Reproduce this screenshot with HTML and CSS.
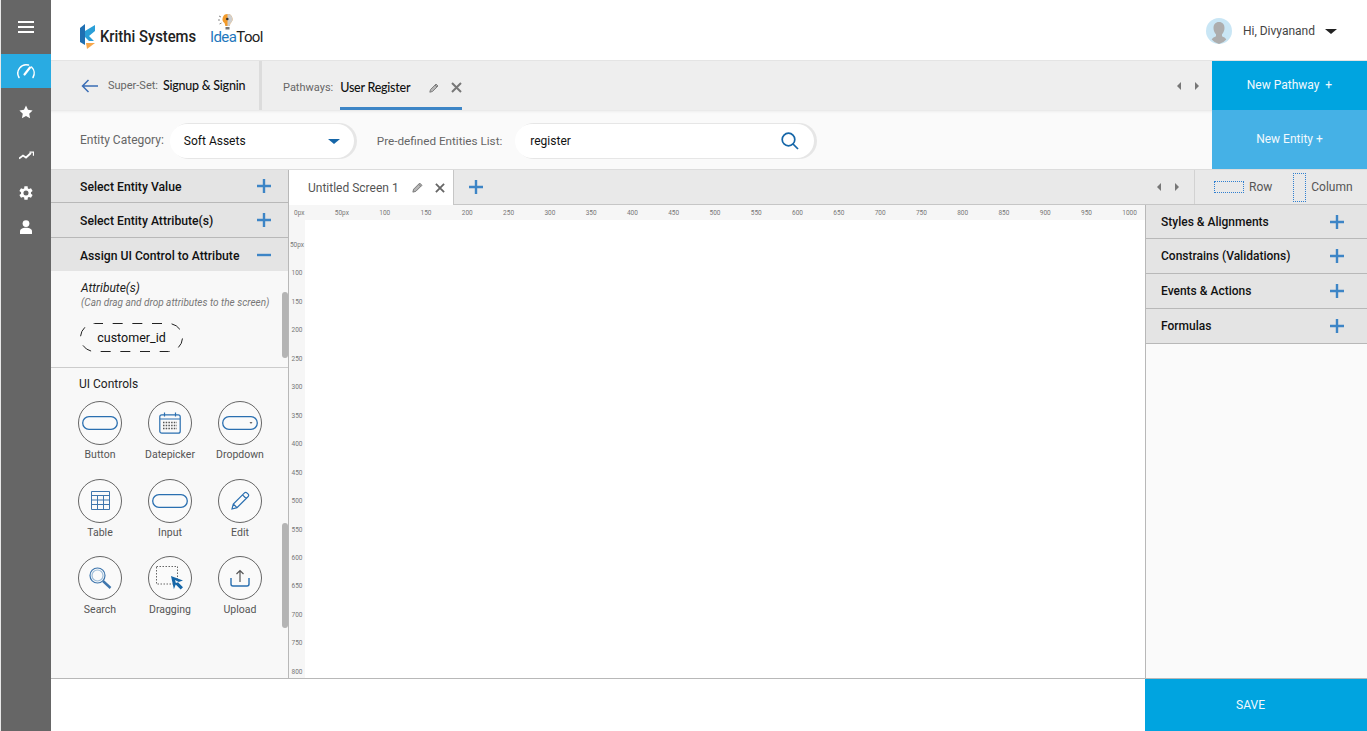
FILE: index.html
```html
<!DOCTYPE html>
<html lang="en">
<head>
    <meta charset="UTF-8">
    <title>IdeaTool - Screen Builder</title>
    <link rel="stylesheet" href="styles.css">
</head>
<body>
<div class="app">
    <!-- left icon rail -->
    <nav class="sidebar">
        <div class="side-item side-menu">
            <svg width="16" height="14" viewBox="0 0 16 14"><path d="M0 2h16M0 7h16M0 12h16" stroke="#fff" stroke-width="2"/></svg>
        </div>
        <div class="side-item side-active">
            <svg width="20" height="16" viewBox="0 0 20 16" fill="none" stroke="#fff" stroke-width="1.5" stroke-linecap="round"><path d="M3 14.5A8.5 8.5 0 0 1 12.5 2"/><path d="M15.5 4A8.5 8.5 0 0 1 17 14.5"/><path d="M8.5 11.5L14 4.5" stroke-width="2.2"/></svg>
        </div>
        <div class="side-item side-star">
            <svg width="14" height="14" viewBox="0 0 24 24" fill="#fff"><path d="M12 1l3.4 7.3 7.9 1-5.8 5.5 1.5 7.9L12 18.8l-7 3.9 1.5-7.9L.7 9.3l7.9-1z"/></svg>
        </div>
        <div class="side-item side-trend">
            <svg width="15" height="9" viewBox="0 0 15 9" fill="none" stroke="#fff" stroke-width="1.8"><path d="M0 7.5l4-3 3 2 5-4.5"/><path d="M10.5 1.2h4v3.5" stroke-width="1.3"/></svg>
        </div>
        <div class="side-item side-gear">
            <svg width="16" height="16" viewBox="0 0 24 24" fill="#fff"><path d="M19.4 13a7.6 7.6 0 0 0 0-2l2.5-1.9-2.4-4.2-3 1.2a7.5 7.5 0 0 0-1.7-1L14.4 1.900H9.600l-.4 3.200a7.500 7.500 0 0 0-1.700 1l-3-1.200-2.400 4.200L4.600 11a7.600 7.600 0 0 0 0 2l-2.500 1.900 2.400 4.200 3-1.200c.5.400 1.100.7 1.700 1l.4 3.200h4.800l.4-3.200c.6-.3 1.200-.6 1.700-1l3 1.200 2.400-4.200zM12 15.800a3.800 3.800 0 1 1 0-7.600 3.800 3.800 0 0 1 0 7.600z"/></svg>
        </div>
        <div class="side-item side-user">
            <svg width="12" height="14" viewBox="0 0 12 14" fill="#fff"><circle cx="6" cy="3.6" r="3.4"/><path d="M0 14v-2.500C0 9 2.500 7.800 6 7.800s6 1.200 6 3.700V14z"/></svg>
        </div>
    </nav>

    <div class="content">
        <header class="topbar">
            <div class="logo">
                <svg width="16" height="25" viewBox="0 0 16 25"><path d="M0 4l5-4v21l-5-3z" fill="#1f6fb2"/><path d="M5 7L15 1v6l-6 5 5 5H9L5 13z" fill="#2a9fd8"/><path d="M6 19h9l-8 6z" fill="#f7a74a"/></svg>
                <span class="logo-name">Krithi Systems</span>
            </div>
            <div class="idea-logo">
                <svg class="bulb" width="18" height="18" viewBox="0 0 18 18"><path d="M9.5 1a5 5 0 0 0-3 9l.8 3h4.400l.8-3a5 5 0 0 0-3-9z" fill="#f29b2c"/><path d="M9.500 1a5 5 0 0 1 3 9l-.8 3H9.500z" fill="#cfcfcf"/><path d="M7.500 14h4v2.500h-4z" fill="#777"/><circle cx="9.300" cy="6" r="1.300" fill="#333"/><path d="M1 3l2 1M0 7h2M1.500 11l2-1" stroke="#555" stroke-width=".7"/></svg>
                <span class="idea">Idea</span><span class="tool">Tool</span>
            </div>
            <div class="user-box">
                <svg width="26" height="26" viewBox="0 0 26 26"><circle cx="13" cy="13" r="13" fill="#c9e6f5"/><path d="M13 4c3.500 0 5.500 2.500 5.500 6 0 3-1.300 5-2.500 6.200v2c1.800 1 3.500 1.500 4.300 3.300A13 13 0 0 1 13 26a13 13 0 0 1-7.300-4.500c.8-1.800 2.500-2.300 4.300-3.300v-2C8.800 15 7.500 13 7.500 10 7.500 6.500 9.500 4 13 4z" fill="#adadad"/></svg>
                <span class="user-name">Hi, Divyanand</span>
                <span class="caret caret-dark"></span>
            </div>
        </header>

        <div class="pathbar">
            <div class="superset">
                <svg width="17" height="14" viewBox="0 0 17 14" fill="none" stroke="#3a6db5" stroke-width="1.5"><path d="M17 7H1.500M7.500 1L1.500 7l6 6"/></svg>
                <span class="label super-label">Super-Set:</span>
                <span class="strong-name">Signup &amp; Signin</span>
            </div>
            <div class="pathway-tab">
                <span class="label">Pathways:</span>
                <span class="strong-name path-name">User Register</span>
                <svg class="pencil" width="10" height="10" viewBox="0 0 10 10" fill="#b5b5b5" stroke="#777" stroke-width=".9"><path d="M.8 9.200l.7-2.700L7 1l2 2-5.500 5.500zM6 2l2 2"/></svg>
                <svg class="close" width="11" height="11" viewBox="0 0 11 11" stroke="#777" stroke-width="2"><path d="M1 1l9 9M10 1l-9 9"/></svg>
            </div>
            <div class="pager pathbar-pager">
                <span class="arrow-left"></span>
                <span class="arrow-right"></span>
            </div>
            <button class="new-btn new-pathway">New Pathway&nbsp; +</button>
        </div>

        <div class="entitybar">
            <span class="label entity-label">Entity Category:</span>
            <div class="pill select-pill">
                <span>Soft Assets</span>
                <span class="caret caret-blue"></span>
            </div>
            <span class="label list-label">Pre-defined Entities List:</span>
            <div class="pill search-pill">
                <span>register</span>
                <svg width="18" height="18" viewBox="0 0 18 18" fill="none" stroke="#1566a8" stroke-width="1.7"><circle cx="7.5" cy="7.5" r="6.3"/><path d="M12 12l5 5"/></svg>
            </div>
            <button class="new-btn new-entity">New Entity +</button>
        </div>

        <div class="workspace">
            <aside class="left-panel">
                <div class="acc-head acc-first">
                    <span>Select Entity Value</span>
                    <svg width="14" height="14" viewBox="0 0 14 14"><path d="M7 0v14M0 7h14" stroke="#3d85c6" stroke-width="2.4"/></svg>
                </div>
                <div class="acc-head acc-second">
                    <span>Select Entity Attribute(s)</span>
                    <svg width="14" height="14" viewBox="0 0 14 14"><path d="M7 0v14M0 7h14" stroke="#3d85c6" stroke-width="2.4"/></svg>
                </div>
                <div class="acc-head acc-open">
                    <span>Assign UI Control to Attribute</span>
                    <svg width="14" height="14" viewBox="0 0 14 14"><path d="M0 7h14" stroke="#3d85c6" stroke-width="2.4"/></svg>
                </div>
                <section class="attributes">
                    <div class="attr-title">Attribute(s)</div>
                    <div class="attr-hint">(Can drag and drop attributes to the screen)</div>
                    <div class="attr-pill">
                        <svg width="103" height="29" viewBox="0 0 103 29" fill="none"><rect x=".5" y=".5" width="102" height="28" rx="14" stroke="#222" stroke-width="1" stroke-dasharray="10 9.67" stroke-dashoffset="1.5"/></svg>
                        <span>customer_id</span>
                    </div>
                    <div class="scroll-thumb thumb-top"></div>
                </section>
                <section class="controls">
                    <div class="controls-title">UI Controls</div>
                    <div class="controls-grid">
                        <div class="control">
                            <div class="control-circle"><svg width="36" height="14" viewBox="0 0 36 14" fill="none" stroke="#2a6fb0" stroke-width="1.3"><rect x=".7" y=".7" width="34.6" height="12.6" rx="6.3"/></svg></div>
                            <span>Button</span>
                        </div>
                        <div class="control">
                            <div class="control-circle"><svg width="22" height="22" viewBox="0 0 22 22" fill="none" stroke="#2a6fb0" stroke-width="1.2"><rect x=".8" y="2.8" width="20.4" height="18.4" rx="2"/><path d="M.8 7h20.400M5.500 .5v4M16.500 .5v4"/><path d="M4 10.500h14M4 13.500h14M4 16.500h14" stroke-width="1.4" stroke-dasharray="1.5 1.2" stroke="#555"/></svg></div>
                            <span>Datepicker</span>
                        </div>
                        <div class="control">
                            <div class="control-circle"><svg width="36" height="14" viewBox="0 0 36 14" fill="none" stroke="#2a6fb0" stroke-width="1.3"><rect x=".7" y=".7" width="34.6" height="12.6" rx="6.3"/><path d="M27.500 6h3l-1.500 2z" fill="#666" stroke="none"/></svg></div>
                            <span>Dropdown</span>
                        </div>
                        <div class="control">
                            <div class="control-circle"><svg width="19" height="19" viewBox="0 0 19 19" fill="none" stroke="#3f76ad" stroke-width="1"><path d="M.5.500h18v18H.5zM.5 4.500h18M.5 9h18M.5 13.500h18M6.500 4.500v14M12.500 4.500v14"/></svg></div>
                            <span>Table</span>
                        </div>
                        <div class="control">
                            <div class="control-circle"><svg width="36" height="14" viewBox="0 0 36 14" fill="none" stroke="#2a6fb0" stroke-width="1.3"><rect x=".7" y=".7" width="34.6" height="12.6" rx="6.3"/></svg></div>
                            <span>Input</span>
                        </div>
                        <div class="control">
                            <div class="control-circle"><svg width="19" height="19" viewBox="0 0 19 19" fill="none" stroke="#2a6fb0" stroke-width="1.2"><path d="M1 18l1.300-5L13.500 1.800a1.600 1.600 0 0 1 2.300 0l1.400 1.400a1.600 1.600 0 0 1 0 2.300L6 16.700zM2.300 13L6 16.700M11.500 3.800l3.700 3.700"/></svg></div>
                            <span>Edit</span>
                        </div>
                        <div class="control">
                            <div class="control-circle"><svg width="23" height="23" viewBox="0 0 23 23" fill="none" stroke="#3f76ad" stroke-width="1.2"><circle cx="8.5" cy="8.5" r="7.5"/><circle cx="8.5" cy="8.5" r="5.5" stroke="#9cbcd8"/><path d="M14 14l7.500 7" stroke-width="2.4"/></svg></div>
                            <span>Search</span>
                        </div>
                        <div class="control">
                            <div class="control-circle"><svg width="28" height="24" viewBox="0 0 28 24" fill="none"><rect x=".5" y=".5" width="21" height="17.5" stroke="#666" stroke-dasharray="1.5 1.5"/><path d="M15 10l12 4.500-5 1.800 5 5-2.300 2.200-5-5-1.800 4.800z" fill="#1566a8"/><path d="M19 14l.9 3 3-1.100z" fill="#f8f8f8"/></svg></div>
                            <span>Dragging</span>
                        </div>
                        <div class="control">
                            <div class="control-circle"><svg width="20" height="18" viewBox="0 0 20 18" fill="none" stroke="#2a6fb0" stroke-width="1.4"><path d="M1 9v6a2 2 0 0 0 2 2h14a2 2 0 0 0 2-2V9"/><path d="M10 13V1.500M6.500 5L10 1.500 13.500 5" stroke="#555" stroke-width="1.2"/></svg></div>
                            <span>Upload</span>
                        </div>
                    </div>
                    <div class="scroll-thumb thumb-bottom"></div>
                </section>
            </aside>

            <div class="work-area">
                <div class="screen-tabs">
                    <div class="screen-tab">
                        <span class="screen-name">Untitled Screen 1</span>
                        <svg class="pencil" width="11" height="11" viewBox="0 0 10 10" fill="#b5b5b5" stroke="#777" stroke-width=".9"><path d="M.8 9.200l.7-2.700L7 1l2 2-5.500 5.500zM6 2l2 2"/></svg>
                        <svg class="close" width="10" height="10" viewBox="0 0 11 11" stroke="#666" stroke-width="2"><path d="M1 1l9 9M10 1l-9 9"/></svg>
                    </div>
                    <svg class="add-screen" width="14" height="14" viewBox="0 0 14 14"><path d="M7 0v14M0 7h14" stroke="#3d85c6" stroke-width="2.4"/></svg>
                    <div class="pager tabs-pager">
                        <span class="arrow-left"></span>
                        <span class="arrow-right"></span>
                    </div>
                    <div class="layout-tools">
                        <span class="dash-box dash-row"></span>
                        <span class="row-label">Row</span>
                        <span class="dash-box dash-col"></span>
                        <span>Column</span>
                    </div>
                </div>
                <div class="work-body">
                    <main class="canvas">
                        <div class="ruler-x">
                            <span>0px</span><span>50px</span><span>100</span><span>150</span><span>200</span><span>250</span><span>300</span><span>350</span><span>400</span><span>450</span><span>500</span><span>550</span><span>600</span><span>650</span><span>700</span><span>750</span><span>800</span><span>850</span><span>900</span><span>950</span><span>1000</span>
                        </div>
                        <div class="canvas-body">
                            <div class="ruler-y">
                                <span>50px</span><span>100</span><span>150</span><span>200</span><span>250</span><span>300</span><span>350</span><span>400</span><span>450</span><span>500</span><span>550</span><span>600</span><span>650</span><span>700</span><span>750</span><span>800</span>
                            </div>
                            <div class="sheet"></div>
                        </div>
                    </main>
                    <aside class="right-panel">
                        <div class="acc-head right-head head-short">
                            <span>Styles &amp; Alignments</span>
                            <svg width="14" height="14" viewBox="0 0 14 14"><path d="M7 0v14M0 7h14" stroke="#3d85c6" stroke-width="2.4"/></svg>
                        </div>
                        <div class="acc-head right-head">
                            <span>Constrains (Validations)</span>
                            <svg width="14" height="14" viewBox="0 0 14 14"><path d="M7 0v14M0 7h14" stroke="#3d85c6" stroke-width="2.4"/></svg>
                        </div>
                        <div class="acc-head right-head">
                            <span>Events &amp; Actions</span>
                            <svg width="14" height="14" viewBox="0 0 14 14"><path d="M7 0v14M0 7h14" stroke="#3d85c6" stroke-width="2.4"/></svg>
                        </div>
                        <div class="acc-head right-head">
                            <span>Formulas</span>
                            <svg width="14" height="14" viewBox="0 0 14 14"><path d="M7 0v14M0 7h14" stroke="#3d85c6" stroke-width="2.4"/></svg>
                        </div>
                    </aside>
                </div>
            </div>
        </div>

        <footer class="footer">
            <button class="save-btn">SAVE</button>
        </footer>
    </div>
</div>
</body>
</html>
```

FILE: styles.css
```css
* {
    box-sizing: border-box;
}

body {
    margin: 0;
    font-family: Roboto, "Liberation Sans", sans-serif;
    color: #111;
    background: #fff;
    overflow: hidden;
}

.app {
    display: flex;
    width: 1367px;
    height: 731px;
}

/* icon rail */
.sidebar {
    width: 51px;
    flex-shrink: 0;
    background: #666;
    border-left: 1px solid #e8e8e8;
}

.side-item {
    display: flex;
    justify-content: center;
    align-items: center;
}

.side-menu { height: 54px; }
.side-active { height: 34px; background: #29abe2; }
.side-star { height: 47px; }
.side-trend { height: 40px; }
.side-gear { height: 36px; }
.side-user { height: 31px; }

.content {
    flex: 1;
    display: flex;
    flex-direction: column;
    min-width: 0;
}

/* top header */
.topbar {
    height: 61px;
    display: flex;
    align-items: center;
    padding-left: 29px;
    background: #fff;
    border-bottom: 1px solid #e4e4e4;
}

.logo {
    display: flex;
    align-items: center;
    gap: 4px;
    margin-top: 12px;
}

.logo-name {
    width: 96px;
    font-size: 17px;
    font-weight: 500;
    color: #222;
    white-space: nowrap;
    transform: scaleX(0.87);
    transform-origin: left center;
}

.idea-logo {
    position: relative;
    margin-left: 14px;
    margin-top: 13px;
    font-size: 15px;
    letter-spacing: -0.6px;
}

.idea-logo .bulb {
    position: absolute;
    left: 8px;
    top: -15px;
}

.idea { color: #1f78bd; }
.tool { color: #222; }

.user-box {
    margin-left: auto;
    margin-right: 30px;
    padding-top: 2px;
    display: flex;
    align-items: center;
}

.user-name {
    margin-left: 11px;
    margin-right: 10px;
    font-size: 12px;
    color: #444;
}

.caret {
    width: 0;
    height: 0;
    border-left: 6px solid transparent;
    border-right: 6px solid transparent;
}

.caret-dark { border-top: 5px solid #222; }
.caret-blue { border-top: 5px solid #1566a8; }

/* pathway row */
.pathbar {
    height: 49px;
    display: flex;
    align-items: center;
    background: #eee;
}

.superset {
    width: 211px;
    height: 100%;
    display: flex;
    align-items: center;
    padding-left: 30px;
    border-right: 3px solid #dcdcdc;
    flex-shrink: 0;
}

.label {
    font-size: 12px;
    color: #666;
    white-space: nowrap;
}

.superset .label, .pathway-tab .label { font-size: 11px; }
.super-label { margin-left: 10px; margin-right: 5px; }

.strong-name {
    font-family: Lato, sans-serif;
    font-size: 12.5px;
    font-weight: 500;
    letter-spacing: -0.25px;
    color: #111;
    white-space: nowrap;
}

.pathway-tab {
    position: relative;
    height: 100%;
    display: flex;
    align-items: center;
    margin-left: 21px;
    padding-top: 4px;
}

.pathway-tab::after {
    content: "";
    position: absolute;
    left: 57px;
    right: 0;
    bottom: 0;
    height: 3px;
    background: #3d85c6;
}

.path-name { margin-left: 7px; }
.pathway-tab .pencil { margin-left: 19px; }
.pathway-tab .close { margin-left: 12px; }

.pager {
    display: flex;
    align-items: center;
    gap: 14px;
}

.pathbar-pager { margin-left: auto; margin-right: 13px; }

.arrow-left, .arrow-right {
    width: 0;
    height: 0;
    border-top: 4.5px solid transparent;
    border-bottom: 4.5px solid transparent;
}

.arrow-left { border-right: 4px solid #777; }
.arrow-right { border-left: 4px solid #777; }

.new-btn {
    width: 155px;
    height: 100%;
    border: 0;
    padding: 0;
    color: #f2f9fd;
    font-family: inherit;
    font-size: 12px;
    flex-shrink: 0;
}

.new-pathway { background: #00a4e0; padding-bottom: 2px; }

/* entity row */
.entitybar {
    height: 59px;
    display: flex;
    align-items: center;
    padding-left: 29px;
    background: #fafafa;
    box-shadow: inset 0 3px 3px -2px #e2e2e2;
}

.entity-label { margin-right: 6px; }
.list-label { margin: 3px 13px 0 23px; font-size: 11.7px; }

.pill {
    height: 34px;
    margin-top: 3px;
    display: flex;
    align-items: center;
    justify-content: space-between;
    background: #fff;
    border-radius: 17px;
    font-size: 12px;
    box-shadow: 2px 0 0 1px #e6e6e6;
}

.select-pill { width: 184px; padding: 0 14px; }
.search-pill { width: 299px; padding: 0 15px; }

.new-entity {
    margin-left: auto;
    padding-bottom: 2px;
    background: #45b1e6;
}

/* main work area */
.workspace {
    flex: 1;
    display: flex;
    min-height: 0;
    border-top: 1px solid #dcdcdc;
}

.left-panel {
    width: 238px;
    flex-shrink: 0;
    display: flex;
    flex-direction: column;
    background: #f8f8f8;
    border-right: 1px solid #b8b8b8;
}

.acc-head {
    display: flex;
    align-items: center;
    justify-content: space-between;
    padding: 0 17px 0 29px;
    background: #e4e4e4;
    font-size: 12.2px;
    font-weight: 500;
    border-bottom: 1px solid #b8b8b8;
    flex-shrink: 0;
}

.left-panel .acc-head span { margin-top: 2px; }

.acc-first { height: 33px; }
.acc-second { height: 35px; }
.acc-open { height: 33px; border-bottom: 0; }

.attributes {
    position: relative;
    height: 97px;
    padding: 10px 0 0 30px;
    border-bottom: 1px solid #ccc;
    flex-shrink: 0;
}

.attr-title {
    font-size: 12px;
    font-style: italic;
    color: #222;
}

.attr-hint {
    margin-top: 2px;
    font-size: 10px;
    font-style: italic;
    color: #777;
    white-space: nowrap;
}

.attr-pill {
    position: relative;
    width: 103px;
    height: 29px;
    margin-top: 15px;
    margin-left: -1px;
    display: flex;
    align-items: center;
    justify-content: center;
    font-size: 12.5px;
}

.attr-pill svg {
    position: absolute;
    left: 0;
    top: 0;
}

.scroll-thumb {
    position: absolute;
    right: 0;
    width: 6px;
    background: #b4b4b4;
    border-radius: 3px;
}

.thumb-top { top: 21px; height: 66px; }
.thumb-bottom { top: 155px; height: 105px; }

.controls {
    position: relative;
    flex: 1;
    padding: 9px 0 0 14px;
}

.controls-title {
    padding-left: 14px;
    font-size: 12px;
    color: #222;
}

.controls-grid {
    display: grid;
    grid-template-columns: 70px 70px 70px;
    grid-auto-rows: 77.5px;
    margin-top: 10px;
}

.control {
    display: flex;
    flex-direction: column;
    align-items: center;
    font-size: 10.5px;
    color: #555;
}

.control-circle {
    width: 44px;
    height: 44px;
    display: flex;
    align-items: center;
    justify-content: center;
    margin-bottom: 3px;
    border: 1px solid #666;
    border-radius: 50%;
    background: #fafafa;
}

/* tabs run over the canvas and the right panel */
.work-area {
    flex: 1;
    min-width: 0;
    display: flex;
    flex-direction: column;
}

.screen-tabs {
    height: 35px;
    display: flex;
    align-items: center;
    background: #e9e9e9;
    border-bottom: 1px solid #c6c6c6;
    flex-shrink: 0;
}

.screen-tab {
    width: 165px;
    height: 35px;
    display: flex;
    align-items: center;
    padding-left: 19px;
    background: #fff;
    border-right: 1px solid #c6c6c6;
    align-self: flex-start;
}

.screen-name {
    font-size: 12px;
    color: #555;
    white-space: nowrap;
}

.screen-tab .pencil { margin-left: 13px; }
.screen-tab .close { margin-left: 12px; }
.add-screen { margin-left: 15px; }

.tabs-pager {
    margin-left: auto;
    height: 100%;
    padding-right: 15px;
    border-right: 1px solid #d2d2d2;
}

.layout-tools {
    display: flex;
    align-items: center;
    padding-left: 19px;
    width: 172px;
    flex-shrink: 0;
    font-size: 12px;
    color: #555;
}

.dash-box {
    display: block;
    border: 1px dotted #2f7fd0;
}

.dash-row { width: 30px; height: 12px; }
.dash-col { width: 13px; height: 29px; margin-left: 21px; margin-right: 5px; }
.row-label { margin-left: 5px; }

.work-body {
    flex: 1;
    display: flex;
    min-height: 0;
}

/* canvas */
.canvas {
    flex: 1;
    min-width: 0;
    display: flex;
    flex-direction: column;
    background: #fff;
}

.ruler-x {
    height: 15px;
    display: flex;
    justify-content: space-between;
    align-items: center;
    padding: 0 8px 0 5px;
    background: #f6f6f6;
    font-size: 6.5px;
    color: #777;
    flex-shrink: 0;
}

.canvas-body {
    flex: 1;
    display: flex;
    min-height: 0;
}

.ruler-y {
    width: 16px;
    display: flex;
    flex-direction: column;
    justify-content: space-between;
    align-items: center;
    padding: 21px 0 2px;
    background: #f6f6f6;
    font-size: 6.5px;
    color: #777;
}

.sheet {
    flex: 1;
    background: #fff;
}

.right-panel {
    width: 222px;
    flex-shrink: 0;
    background: #fafafa;
    border-left: 1px solid #b8b8b8;
}

.right-head {
    height: 35px;
    padding: 0 23px 0 15px;
    font-size: 12px;
}

.head-short { height: 34px; }

/* bottom bar */
.footer {
    height: 53px;
    display: flex;
    justify-content: flex-end;
    border-top: 1px solid #b8b8b8;
    background: #fff;
    flex-shrink: 0;
}

.save-btn {
    width: 222px;
    border: 0;
    padding: 0 11px 0 0;
    background: #00a4e0;
    color: #f2f9fd;
    font-family: inherit;
    font-size: 12px;
}
```
